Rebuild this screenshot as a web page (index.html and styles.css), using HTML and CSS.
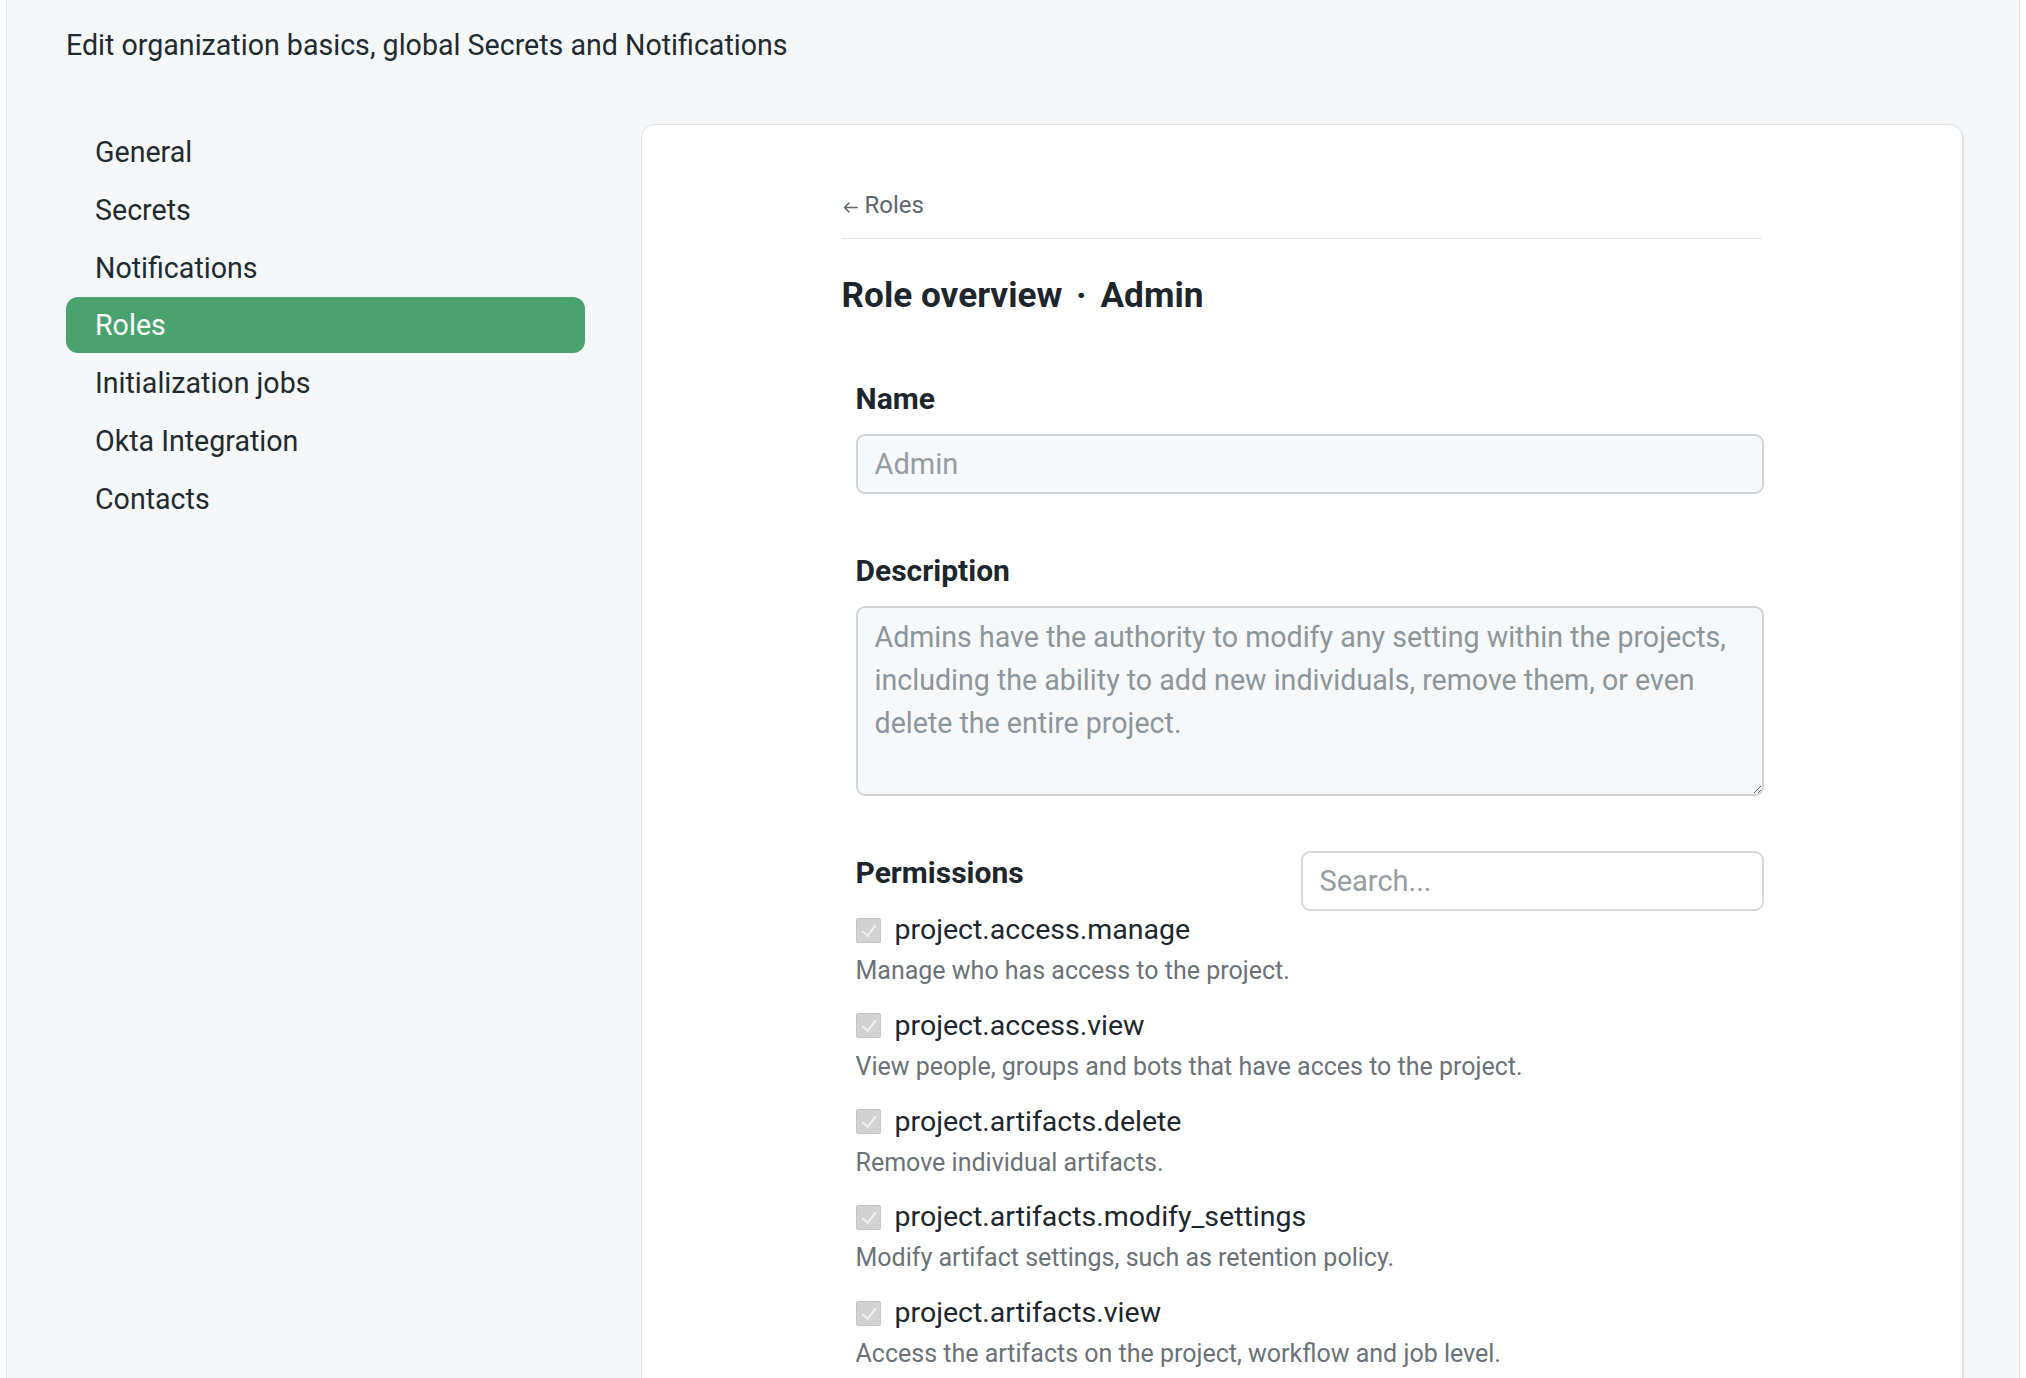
FILE: index.html
```html
<!DOCTYPE html>
<html lang="en">
<head>
<meta charset="utf-8">
<title>Organization settings · Roles</title>
<link rel="stylesheet" href="styles.css">
</head>
<body>
<div class="app">
  <p class="page-intro">Edit organization basics, global Secrets and Notifications</p>
  <div class="layout">
    <nav class="sidenav">
      <a class="nav-item" href="#">General</a>
      <a class="nav-item" href="#">Secrets</a>
      <a class="nav-item" href="#">Notifications</a>
      <a class="nav-item active" href="#">Roles</a>
      <a class="nav-item" href="#">Initialization jobs</a>
      <a class="nav-item" href="#">Okta Integration</a>
      <a class="nav-item" href="#">Contacts</a>
    </nav>
    <main class="card">
      <div class="card-inner">
        <div class="back-row"><a class="back-link" href="#"><svg class="arrow" width="16" height="12" viewBox="0 0 16 12" aria-hidden="true"><path d="M15 6.5H2.5M7 2L2.5 6.5 7 11" fill="none" stroke="currentColor" stroke-width="1.6" stroke-linecap="round" stroke-linejoin="round"/></svg>Roles</a></div>
        <h1 class="title">Role overview <span class="dot">·</span> Admin</h1>
        <div class="form">
          <div class="field">
            <label class="label" for="role-name">Name</label>
            <input id="role-name" class="input input-disabled" type="text" placeholder="Admin" disabled>
          </div>
          <div class="field">
            <label class="label" for="role-desc">Description</label>
            <textarea id="role-desc" class="input textarea" readonly>Admins have the authority to modify any setting within the projects, including the ability to add new individuals, remove them, or even delete the entire project.</textarea>
          </div>
          <div class="perm-head">
            <span class="label perm-label">Permissions</span>
            <input class="input search" type="text" placeholder="Search...">
          </div>
          <ul class="perm-list">
            <li class="perm">
              <div class="perm-name"><span class="check"></span>project.access.manage</div>
              <div class="perm-desc">Manage who has access to the project.</div>
            </li>
            <li class="perm">
              <div class="perm-name"><span class="check"></span>project.access.view</div>
              <div class="perm-desc">View people, groups and bots that have acces to the project.</div>
            </li>
            <li class="perm">
              <div class="perm-name"><span class="check"></span>project.artifacts.delete</div>
              <div class="perm-desc">Remove individual artifacts.</div>
            </li>
            <li class="perm">
              <div class="perm-name"><span class="check"></span>project.artifacts.modify_settings</div>
              <div class="perm-desc">Modify artifact settings, such as retention policy.</div>
            </li>
            <li class="perm">
              <div class="perm-name"><span class="check"></span>project.artifacts.view</div>
              <div class="perm-desc">Access the artifacts on the project, workflow and job level.</div>
            </li>
          </ul>
        </div>
      </div>
    </main>
  </div>
</div>
</body>
</html>
```
FILE: styles.css
```css
* { box-sizing: border-box; }

html, body {
  margin: 0;
  padding: 0;
  background: #ffffff;
}

body {
  font-family: Roboto, "Liberation Sans", Arial, sans-serif;
  color: #1f2a31;
  overflow: hidden;
  height: 1378px;
}

.app {
  margin: 0 6px;
  height: 1378px;
  overflow: hidden;
  background: #f5f7f8;
  border-left: 1px solid #e4e6e8;
  border-right: 1px solid #e4e6e8;
  padding: 25px 56px 0 59px;
}

.page-intro {
  margin: 0;
  font-size: 28.6px;
  line-height: 40px;
  color: #1f2a31;
}

.layout {
  display: flex;
  align-items: flex-start;
  gap: 56px;
  margin-top: 59px;
}

.sidenav {
  flex: 0 0 519px;
  display: flex;
  flex-direction: column;
  gap: 1.8px;
}

.nav-item {
  display: block;
  height: 56px;
  line-height: 56px;
  padding: 0 29px;
  font-size: 28.6px;
  color: #1f2a31;
  text-decoration: none;
  border-radius: 12px;
}

.nav-item.active {
  background: #4aa36d;
  color: #ffffff;
}

.card {
  flex: 1 1 auto;
  background: #ffffff;
  border: 1px solid #dfe2e5;
  border-radius: 14px;
  box-shadow: 1px 1px 2px rgba(0, 0, 0, 0.08);
  padding: 64px 0 80px;
  min-height: 1400px;
}

.card-inner {
  width: 923px;
  margin: 0 auto;
  padding-left: 1px;
}

.back-row {
  padding-bottom: 17px;
  border-bottom: 1px solid #e1e3e5;
  margin-right: 2px;
}

.back-link {
  font-size: 24px;
  line-height: 32px;
  color: #5c666d;
  text-decoration: none;
  display: inline-flex;
  align-items: center;
  gap: 7px;
}

.arrow {
  display: block;
  margin-top: 4px;
}

.title {
  margin: 34px 0 0;
  font-size: 35.2px;
  line-height: 44px;
  font-weight: 700;
  color: #1d262c;
}

.dot {
  padding: 0 5px;
}

.form {
  margin-left: 14px;
  margin-top: 64px;
}

.field {
  display: flex;
  flex-direction: column;
  margin-bottom: 59px;
}

.label {
  font-size: 30px;
  line-height: 36px;
  font-weight: 700;
  color: #1d262c;
  margin-bottom: 17px;
}

.input {
  font-family: inherit;
  font-size: 29px;
  color: #8d959b;
  border: 2px solid #d0d4d7;
  border-radius: 9px;
  padding: 0 17px;
  outline: none;
}

.input::placeholder {
  color: #959ca2;
  opacity: 1;
}

.input-disabled {
  height: 60px;
  background: #f7f8f9;
}

.textarea {
  height: 190px;
  background: #f7f8f9;
  font-size: 28.6px;
  line-height: 43px;
  padding-top: 8px;
  resize: vertical;
  color: #8d959b;
}

.perm-head {
  display: flex;
  justify-content: space-between;
  align-items: flex-start;
  margin-top: -4px;
}

.perm-label {
  margin: 4px 0 0;
}

.search {
  width: 463px;
  height: 60px;
  background: #ffffff;
  border-color: #d6d9dc;
}

.perm-list {
  list-style: none;
  margin: 1px 0 0;
  padding: 0;
}

.perm {
  margin-bottom: 19.8px;
}

.perm-name {
  display: flex;
  align-items: center;
  gap: 14px;
  font-size: 28.5px;
  line-height: 36px;
  color: #1d262c;
}

.check {
  flex: 0 0 25px;
  width: 25px;
  height: 25px;
  border: 1px solid #c4c4c4;
  border-radius: 2px;
  background: #d2d2d2;
  position: relative;
}

.check::after {
  content: "";
  position: absolute;
  left: 8px;
  top: 3px;
  width: 6px;
  height: 12px;
  border: solid #f2f2f2;
  border-width: 0 2.5px 2.5px 0;
  transform: rotate(38deg);
}

.perm-desc {
  margin-top: 6px;
  font-size: 25px;
  line-height: 34px;
  color: #6a7177;
}
```
